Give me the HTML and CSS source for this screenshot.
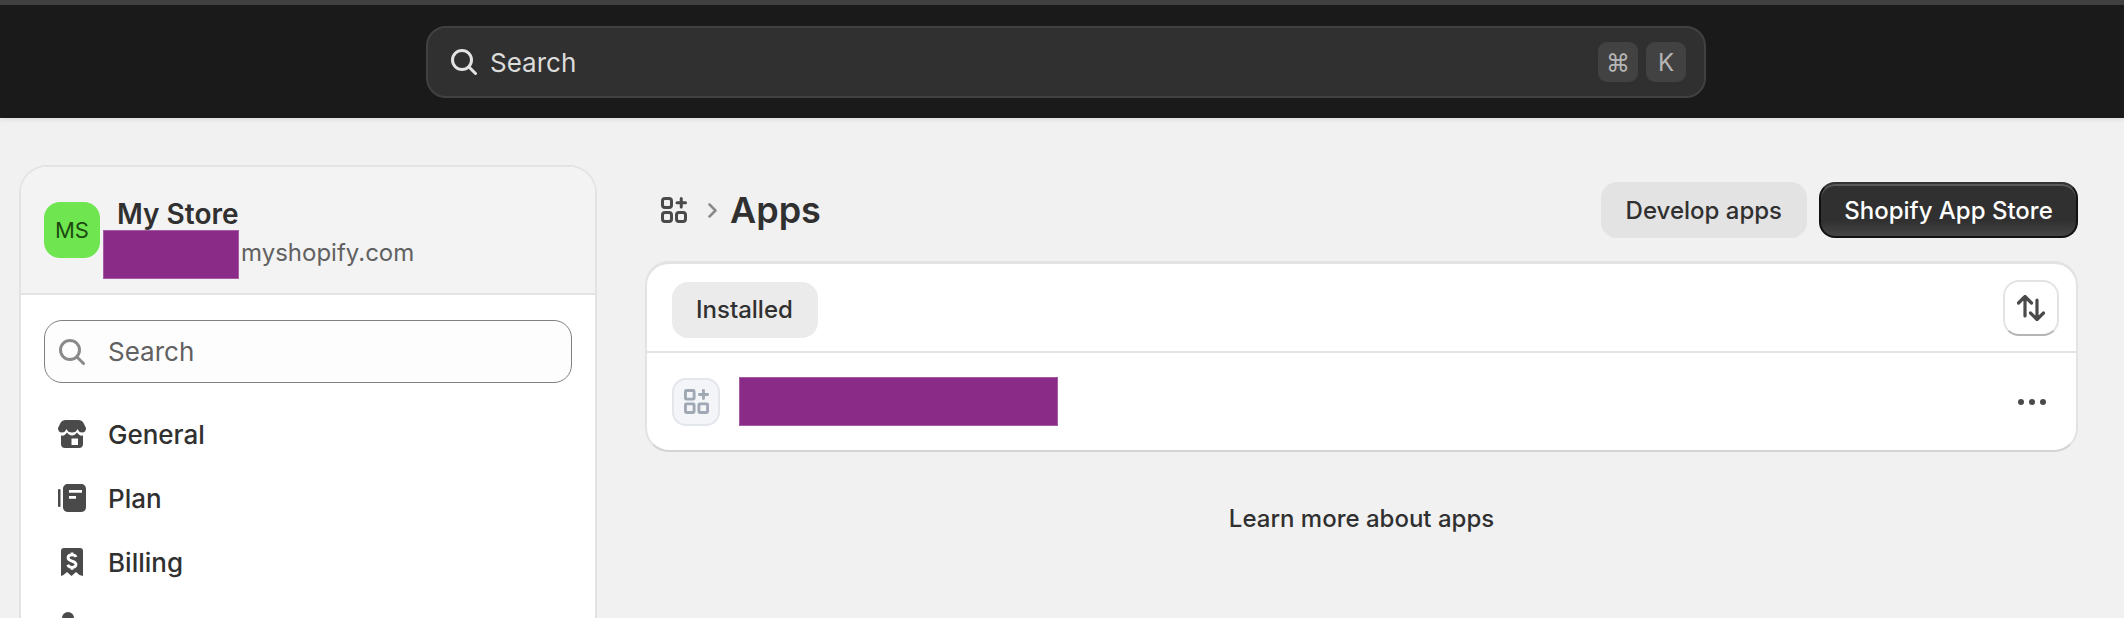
FILE: index.html
```html
<!DOCTYPE html>
<html lang="en">
<head>
    <meta charset="UTF-8">
    <meta name="viewport" content="width=device-width, initial-scale=1.0">
    <title>Apps</title>
    <link rel="stylesheet" href="styles.css">
</head>
<body>
    <div class="top-strip"></div>
    <header class="topbar">
        <div class="global-search">
            <svg class="global-search-icon" viewBox="0 0 26 26"><circle cx="11" cy="11" r="9.5"/><path d="M18 18l6.5 6.5"/></svg>
            <span class="global-search-text">Search</span>
            <span class="key">⌘</span>
            <span class="key">K</span>
        </div>
    </header>

    <div class="page">
        <aside class="sidebar">
            <div class="store-head">
                <div class="avatar">MS</div>
                <div class="store-info">
                    <div class="store-name">My Store</div>
                    <div class="store-domain"><span class="redacted redacted-domain"></span><span class="domain-text">myshopify.com</span></div>
                </div>
            </div>
            <div class="sidebar-body">
                <div class="side-search">
                    <svg class="side-search-icon" viewBox="0 0 26 26"><circle cx="11" cy="11" r="9.5"/><path d="M18 18l6.5 6.5"/></svg>
                    <span>Search</span>
                </div>
                <nav class="side-nav">
                    <a class="side-link">
                        <svg class="side-icon" viewBox="0 0 28 28">
                            <path d="M8 0h12c3 0 5 1.500 6 4l2 4c0 3-1.500 4.500-4 4.500-2 0-3.500-1-4.500-3.500-1 2.500-2.500 3.500-5.500 3.500s-4.500-1-5.500-3.500c-1 2.500-2.500 3.500-4.500 3.500-2.500 0-4-1.500-4-4.500l2-4C3 1.500 5 0 8 0z"/>
                            <path fill-rule="evenodd" d="M3 15.500c2.500.5 4.500-.5 6-3 1.500 2 3 3 5 3s3.500-1 5-3c1.500 2.500 3.500 3.500 6 3V24c0 2.500-1.500 4-4 4H7c-2.500 0-4-1.500-4-4zM13.500 25H20v-6.500h-6.500z"/>
                        </svg>
                        <span>General</span>
                    </a>
                    <a class="side-link">
                        <svg class="side-icon" viewBox="0 0 28 28">
                            <rect x="0" y="5" width="2.500" height="18" rx="1"/>
                            <path fill-rule="evenodd" d="M10 0h13c3 0 5 2 5 5v18c0 3-2 5-5 5H10c-3 0-5-2-5-5V5c0-3 2-5 5-5zM11 6v2.800h13V6zM11 12v2.800h7V12z"/>
                        </svg>
                        <span>Plan</span>
                    </a>
                    <a class="side-link">
                        <svg class="side-icon" viewBox="0 0 28 28">
                            <path d="M6 0h16c2 0 3 1 3 3v25l-3.500-1-3.500-3-4.500 4-4.500-4-3.500 3-2.500 1V3c0-2 1-3 3-3z"/>
                            <path class="icon-cut" d="M18 9c-.5-1.500-2-2.200-4-2.200-2.500 0-4 1.200-4 3 0 4 8 2.500 8 6.500 0 1.800-1.700 3-4 3-2.200 0-3.700-1-4.200-2.500M14 4.500v2.300M14 19.300v2.500"/>
                        </svg>
                        <span>Billing</span>
                    </a>
                    <a class="side-link">
                        <svg class="side-icon" viewBox="0 0 28 28">
                            <circle cx="10" cy="6" r="6"/>
                            <path d="M0 24c0-6 4-9 10-9s10 3 10 9z"/>
                        </svg>
                    </a>
                </nav>
            </div>
        </aside>

        <main class="main">
            <div class="page-head">
                <div class="crumbs">
                    <svg class="apps-icon" viewBox="0 0 26 26"><rect x="1.500" y="1.500" width="9" height="9" rx="2.500"/><rect x="1.500" y="15.500" width="9" height="9" rx="2.500"/><rect x="15.500" y="15.500" width="9" height="9" rx="2.500"/><path d="M20.250 1.500v8.500M16 5.750h8.500"/></svg>
                    <svg class="crumb-chevron" viewBox="0 0 9 15"><path d="M1.500 1.500L7.500 7.500l-6 6"/></svg>
                    <h1>Apps</h1>
                </div>
                <div class="actions">
                    <button class="btn btn-light">Develop apps</button>
                    <button class="btn btn-dark">Shopify App Store</button>
                </div>
            </div>

            <section class="card">
                <div class="tabs-row">
                    <span class="tab">Installed</span>
                    <button class="sort-btn">
                        <svg class="sort-icon" viewBox="0 0 28 26"><path d="M8 21V1.500M1.500 8L8 1.500 14.500 8M20 5v19.500M13.500 18l6.500 6.500 6.500-6.500"/></svg>
                    </button>
                </div>
                <div class="app-row">
                    <div class="app-thumb">
                        <svg class="thumb-icon" viewBox="0 0 26 26"><rect x="1.500" y="1.500" width="9" height="9" rx="1"/><rect x="1.500" y="15.500" width="9" height="9" rx="1"/><rect x="15.500" y="15.500" width="9" height="9" rx="1"/><path d="M20.250 1.500v8.500M16 5.750h8.500"/></svg>
                    </div>
                    <span class="redacted redacted-app"></span>
                    <div class="dots"><i></i><i></i><i></i></div>
                </div>
            </section>

            <p class="learn-more">Learn more about apps</p>
        </main>
    </div>
</body>
</html>
```

FILE: styles.css
```css
html, body {
    height: 618px;
    overflow: hidden;
}
body {
    margin: 0;
    background-color: #f1f1f1;
    font-family: Inter, "Liberation Sans", sans-serif;
    color: #303030;
}
.top-strip {
    height: 5px;
    background-color: #404040;
}
.topbar {
    height: 113px;
    background-color: #1a1a1a;
    padding: 21px 0 0 426px;
    box-sizing: border-box;
    box-shadow: 0 2px 4px rgba(0, 0, 0, 0.08);
}
.global-search {
    width: 1280px;
    height: 72px;
    box-sizing: border-box;
    display: flex;
    align-items: center;
    gap: 8px;
    padding: 0 18px 0 23px;
    background-color: #303030;
    border: 2px solid #414141;
    border-radius: 20px;
}
.global-search-icon {
    width: 26px;
    height: 26px;
    fill: none;
    stroke: #e3e3e3;
    stroke-width: 3;
    stroke-linecap: round;
}
.global-search-text {
    flex: 1;
    margin-left: 5px;
    font-size: 26px;
    color: #dcdcdc;
}
.key {
    width: 40px;
    height: 40px;
    display: flex;
    align-items: center;
    justify-content: center;
    background-color: #424242;
    border-radius: 9px;
    color: #b5b5b5;
    font-size: 24px;
}

.page {
    height: 500px;
    overflow: hidden;
    box-sizing: border-box;
    display: grid;
    grid-template-columns: 578px 1433px;
    column-gap: 48px;
    padding: 47px 0 0 19px;
}
.sidebar {
    height: 453px;
    box-sizing: border-box;
    background-color: #fff;
    border: 2px solid #e3e3e3;
    border-bottom: none;
    border-radius: 28px 28px 0 0;
    overflow: hidden;
}
.store-head {
    height: 128px;
    box-sizing: border-box;
    display: flex;
    align-items: flex-start;
    padding: 35px 0 0 23px;
    background-color: #f3f3f3;
    border-bottom: 2px solid #e3e3e3;
}
.avatar {
    width: 56px;
    height: 56px;
    display: flex;
    align-items: center;
    justify-content: center;
    background-color: #6fe650;
    border-radius: 16px;
    color: #1d4a10;
    font-size: 22px;
}
.store-info {
    margin-left: 3px;
}
.store-name {
    margin-top: -2px;
    margin-left: 14px;
    font-size: 28px;
    line-height: 28px;
    font-weight: 600;
}
.store-domain {
    display: flex;
    align-items: center;
    margin-top: 2px;
    font-size: 24px;
    color: #616161;
}
.domain-text {
    margin-bottom: 4px;
}
.redacted {
    display: block;
    box-sizing: border-box;
    background-color: #8a2b88;
    border: 1px solid #a65ca4;
}
.redacted-domain {
    width: 136px;
    height: 49px;
    margin-right: 2px;
}
.sidebar-body {
    padding: 25px 23px 0;
}
.side-search {
    height: 63px;
    box-sizing: border-box;
    display: flex;
    align-items: center;
    gap: 23px;
    padding-left: 14px;
    background-color: #fdfdfd;
    border: 1px solid #808080;
    border-radius: 18px;
    font-size: 26px;
    color: #616161;
}
.side-search-icon {
    width: 26px;
    height: 26px;
    fill: none;
    stroke: #8a8a8a;
    stroke-width: 3;
    stroke-linecap: round;
}
.side-nav {
    display: flex;
    flex-direction: column;
    margin-top: 19px;
}
.side-link {
    height: 64px;
    display: flex;
    align-items: center;
    gap: 22px;
    padding-left: 14px;
    font-size: 26px;
    font-weight: 500;
}
.side-icon {
    width: 28px;
    height: 28px;
    fill: #4a4a4a;
}
.icon-cut {
    fill: none;
    stroke: #fff;
    stroke-width: 2.800;
}

.page-head {
    height: 96px;
    padding-top: 17px;
    box-sizing: border-box;
    display: flex;
    justify-content: space-between;
}
.crumbs {
    display: flex;
    align-items: center;
    height: 56px;
    padding-left: 16px;
}
.apps-icon {
    width: 26px;
    height: 26px;
    fill: none;
    stroke: #4a4a4a;
    stroke-width: 3;
    stroke-linecap: round;
}
.crumb-chevron {
    width: 9px;
    height: 15px;
    margin: 0 13px 0 21px;
    fill: none;
    stroke: #8a8a8a;
    stroke-width: 2.500;
    stroke-linecap: round;
    stroke-linejoin: round;
}
h1 {
    margin: 0;
    font-size: 36px;
    font-weight: 600;
}
.actions {
    display: flex;
    gap: 12px;
}
.btn {
    height: 56px;
    border: none;
    border-radius: 16px;
    background-color: #e3e3e3;
    color: #303030;
    font-family: inherit;
    font-size: 24px;
    font-weight: 500;
}
.btn-light {
    padding: 0 25px;
}
.btn-dark {
    width: 259px;
    padding: 0;
    background: linear-gradient(#303030 70%, #454545);
    border: 2px solid #111;
    border-top-color: #333;
    box-shadow: inset 0 2px 0 #5a5a5a;
    color: #fff;
}
.card {
    height: 191px;
    box-sizing: border-box;
    background-color: #fff;
    border: 2px solid #e3e3e3;
    border-top-width: 3px;
    border-bottom-color: #d4d4d4;
    border-radius: 24px;
}
.tabs-row {
    height: 89px;
    box-sizing: border-box;
    display: flex;
    align-items: center;
    justify-content: space-between;
    padding: 0 17px 0 25px;
    border-bottom: 2px solid #e3e3e3;
}
.tab {
    height: 56px;
    margin-top: 4px;
    display: flex;
    align-items: center;
    padding: 0 25px 0 24px;
    background-color: #ebebeb;
    border-radius: 16px;
    font-size: 24px;
    font-weight: 500;
}
.sort-btn {
    width: 56px;
    height: 56px;
    padding: 0;
    display: flex;
    align-items: center;
    justify-content: center;
    background-color: #fff;
    border: 2px solid #e3e3e3;
    border-bottom-color: #b5b5b5;
    border-radius: 16px;
}
.sort-icon {
    width: 28px;
    height: 26px;
    fill: none;
    stroke: #4a4a4a;
    stroke-width: 3.200;
    stroke-linecap: round;
    stroke-linejoin: round;
}
.app-row {
    height: 97px;
    display: flex;
    align-items: center;
    padding: 0 30px 0 25px;
}
.app-thumb {
    width: 48px;
    height: 48px;
    box-sizing: border-box;
    display: flex;
    align-items: center;
    justify-content: center;
    background-color: #f3f5f8;
    border: 2px solid #e3e6ea;
    border-radius: 14px;
}
.thumb-icon {
    width: 25px;
    height: 25px;
    fill: none;
    stroke: #a0a8b4;
    stroke-width: 3;
    stroke-linecap: round;
}
.redacted-app {
    width: 319px;
    height: 49px;
    margin-left: 19px;
}
.dots {
    margin-left: auto;
    display: flex;
    gap: 5px;
}
.dots i {
    width: 6px;
    height: 6px;
    border-radius: 50%;
    background-color: #4a4a4a;
}
.learn-more {
    margin: 52px 0 0;
    text-align: center;
    font-size: 24px;
    font-weight: 500;
}
```
